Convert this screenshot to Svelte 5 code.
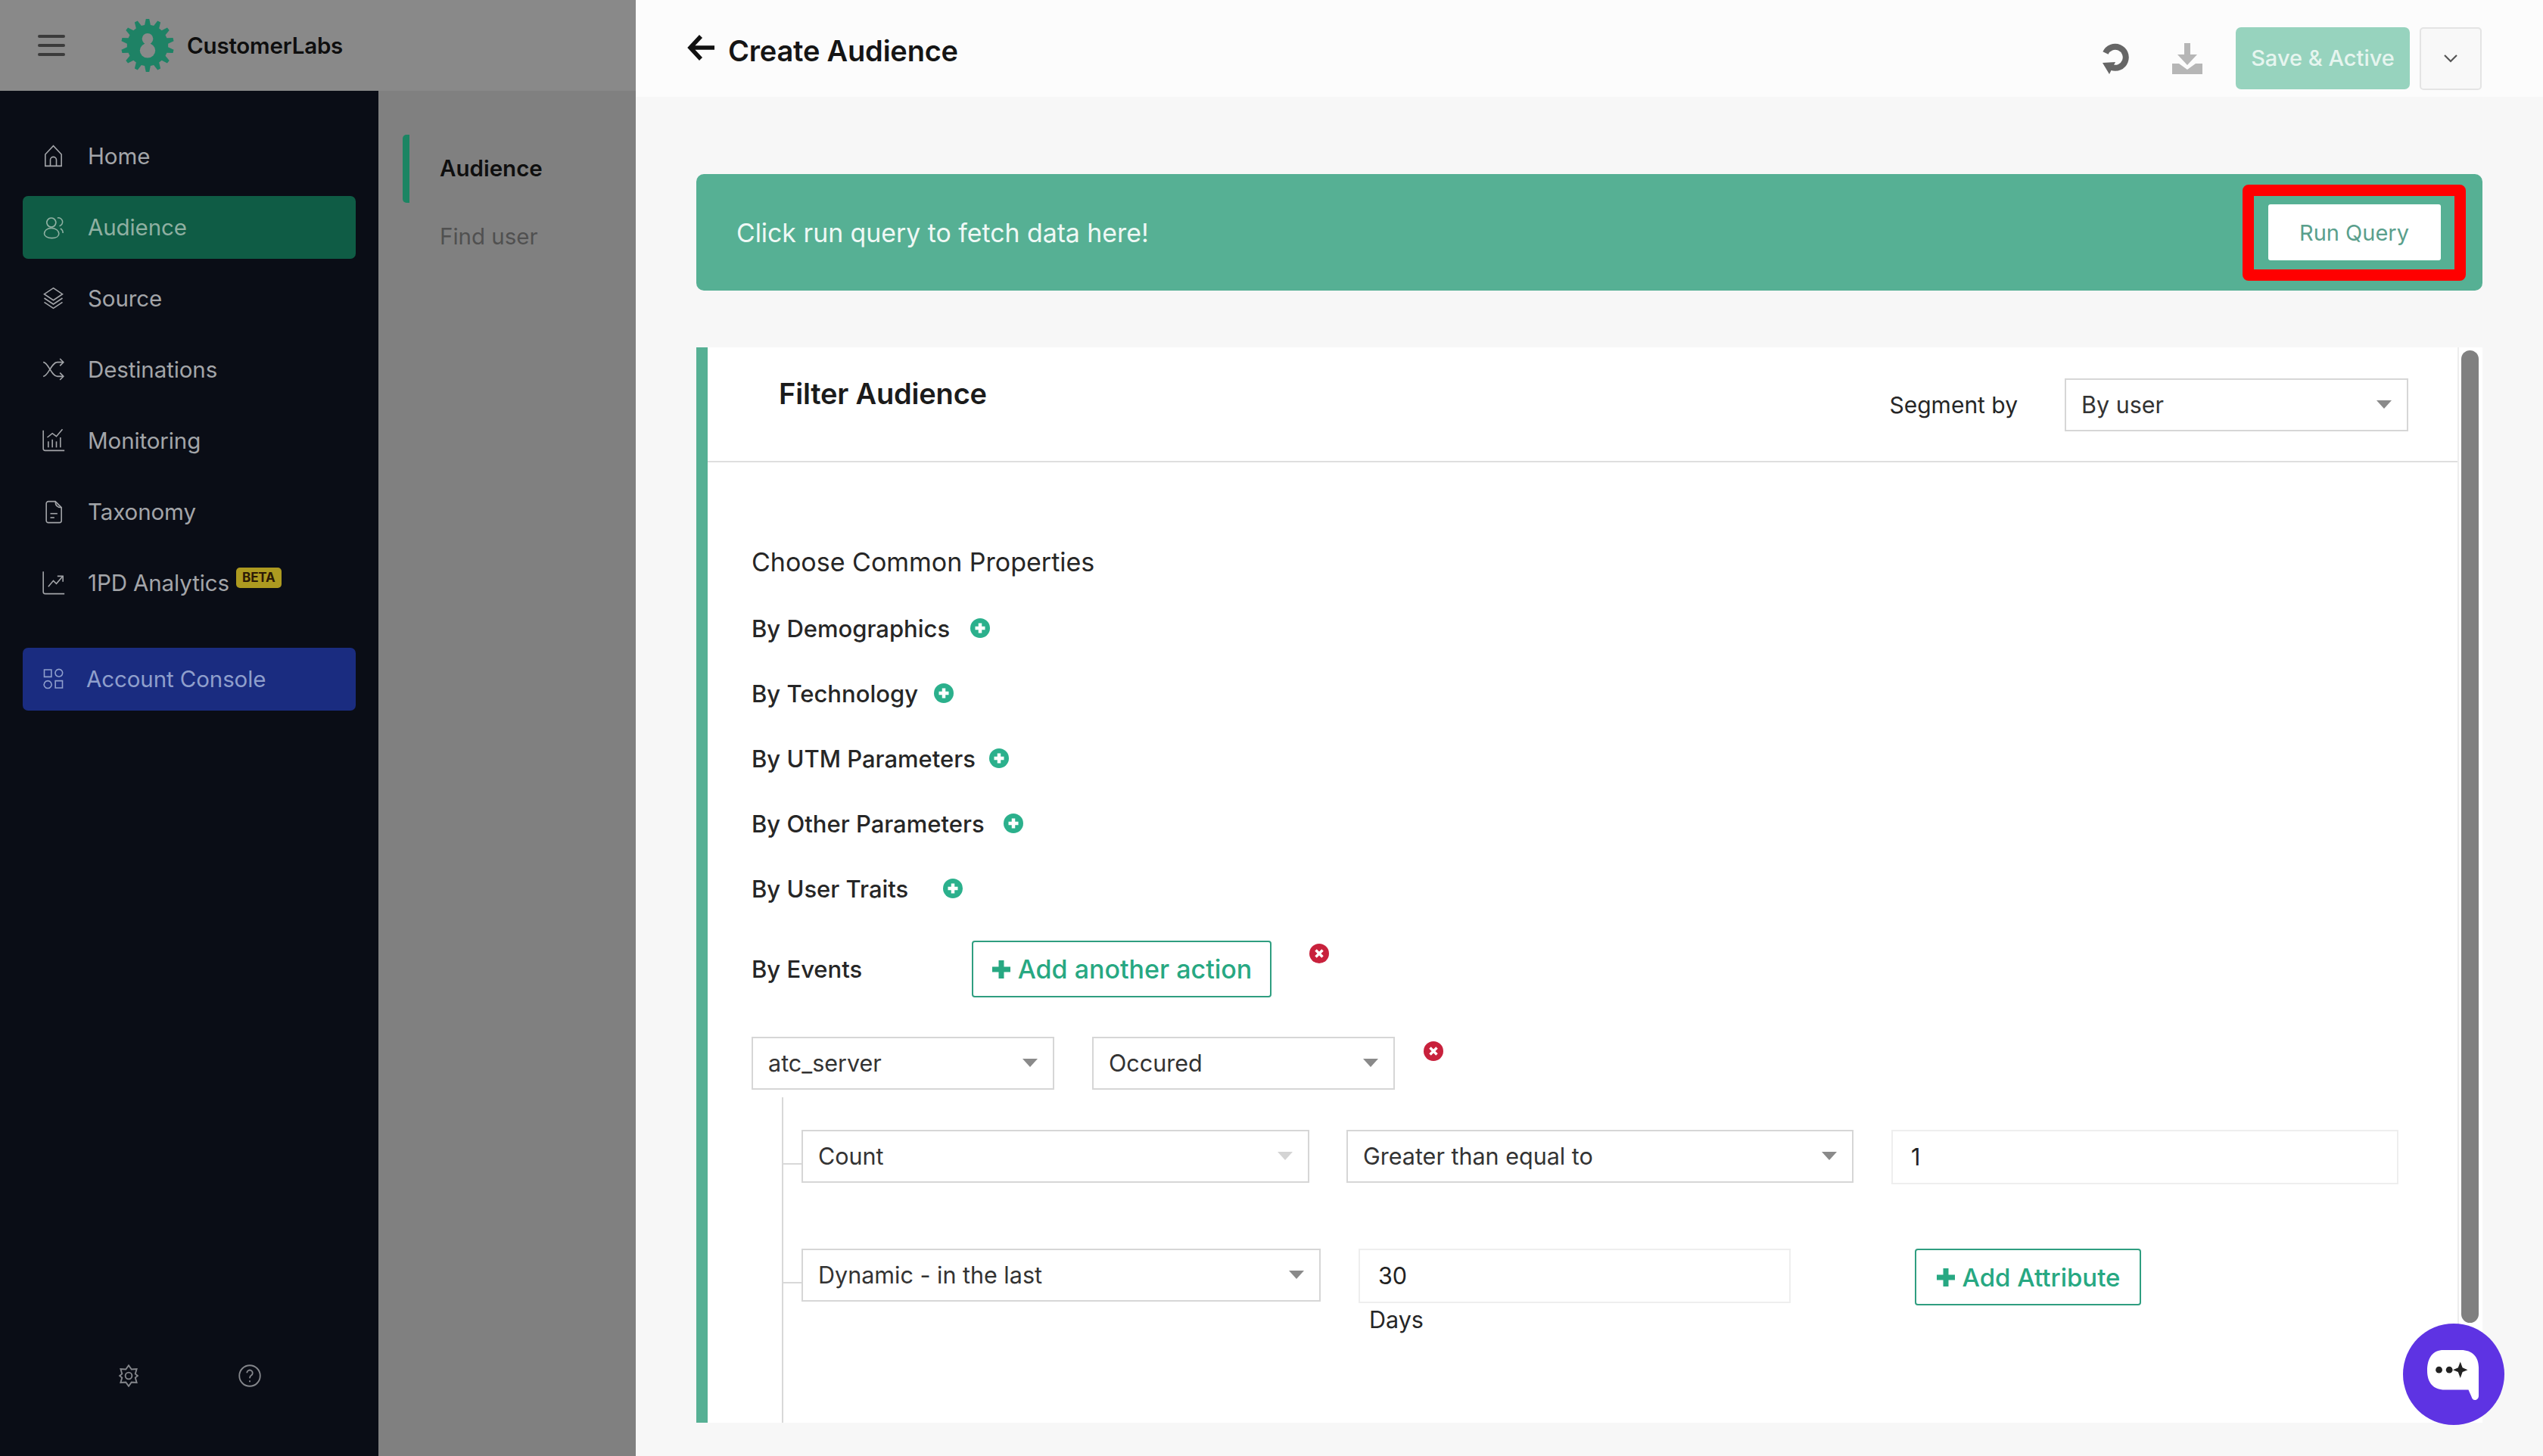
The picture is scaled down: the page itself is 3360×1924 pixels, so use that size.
<script>
  const nav = [
    { label: "Home", paths: ["M4 22V10.500L12 2l8 8.500V22z", "M9 22v-6a3 3 0 0 1 6 0v6"] },
    { label: "Audience", active: true, paths: ["M10 3a4.500 4.500 0 1 1-.01 0z", "M10 13c-4.500 0-7 3-7 5.500S6 23 10.500 23s7-2 7-4.500S14.500 13 10 13z", "M16 3a4 4 0 0 1 2 8", "M19 13.500c1.500.8 2.500 2.500 2.500 4.500"] },
    { label: "Source", paths: ["M12 2l9 6-9 6-9-6z", "M3 12l9 6 9-6", "M3 16l9 6 9-6"] },
    { label: "Destinations", paths: ["M2 5c5 0 8 14 14 14h6", "M2 19c5 0 8-14 14-14h6", "M18.500 1.500L22 5l-3.500 3.500", "M18.500 15.500L22 19l-3.500 3.500"] },
    { label: "Monitoring", paths: ["M2 2v18a2 2 0 0 0 2 2h19", "M7 19v-6", "M11 19v-8", "M15 19v-6", "M19 19V9", "M6 9l5-4 4 3 6-7"] },
    { label: "Taxonomy", paths: ["M5 4a2 2 0 0 1 2-2h7l6 6v13a2 2 0 0 1-2 2H7a2 2 0 0 1-2-2z", "M14 2c0 4 2 6 6 6", "M9 14h7", "M9 18h4"] },
    { label: "1PD Analytics", beta: true, paths: ["M2 1v20a2 2 0 0 0 2 2h19", "M7 16l5-6 3 3 6-7", "M16 5.500h5.500V11"] },
  ];
  const consolePaths = ["M3 3h7v7H3z", "M17.500 2.500a3.700 3.700 0 1 1-.01 0z", "M6.500 14a3.700 3.700 0 1 1-.01 0z", "M14 14h7v7h-7z"];

  const propRows = [
    { label: "By Demographics", gap: 27 },
    { label: "By Technology", gap: 21 },
    { label: "By UTM Parameters", gap: 18 },
    { label: "By Other Parameters", gap: 25 },
    { label: "By User Traits", gap: 46 },
  ];

  // logo cog outline, 14 teeth
  function cogPoints(teeth, outer, inner, cx, cy) {
    const pts = [];
    const step = (Math.PI * 2) / teeth;
    for (let i = 0; i < teeth; i++) {
      const a = i * step - Math.PI / 2;
      const spots = [
        [a - step * 0.32, inner],
        [a - step * 0.14, outer],
        [a + step * 0.14, outer],
        [a + step * 0.32, inner],
      ];
      for (const [t, r] of spots) {
        pts.push((cx + Math.cos(t) * r).toFixed(1) + "," + (cy + Math.sin(t) * r).toFixed(1));
      }
    }
    return pts.join(" ");
  }
  const logoCog = cogPoints(14, 36, 28, 36, 36);
</script>

{#snippet plusCircle()}
  <svg class="dot" viewBox="0 0 26 26" aria-hidden="true">
    <circle cx="13" cy="13" r="13" fill="#2bb08c" />
    <path d="M13 6.500v13M6.500 13h13" stroke="#fff" stroke-width="4.500" />
  </svg>
{/snippet}

{#snippet closeCircle()}
  <svg class="dot" viewBox="0 0 26 26" aria-hidden="true">
    <circle cx="13" cy="13" r="13" fill="#c8213c" />
    <path d="M8.500 8.500l9 9M17.500 8.500l-9 9" stroke="#fff" stroke-width="3.500" />
  </svg>
{/snippet}

{#snippet plusGlyph()}
  <svg class="plus" viewBox="0 0 26 26" aria-hidden="true">
    <path d="M13 1v24M1 13h24" stroke="#27a882" stroke-width="7" />
  </svg>
{/snippet}

{#snippet select(value, cls = "")}
  <div class="select {cls}">
    <span>{value}</span>
    <i class="caret"></i>
  </div>
{/snippet}

<div class="shell">
  <div class="left">
    <div class="brand">
      <div class="burger"><i></i><i></i><i></i></div>
      <svg class="logo" viewBox="0 0 72 72" aria-hidden="true">
        <polygon points={logoCog} fill="#1e8265" />
        <circle cx="36" cy="27" r="7.500" fill="#8a8a8a" />
        <ellipse cx="36" cy="43" rx="10.500" ry="10" fill="#8a8a8a" />
        <rect x="32" y="30" width="8" height="6" fill="#8a8a8a" />
      </svg>
      <span class="brand-name">CustomerLabs</span>
    </div>

    <div class="left-body">
      <nav class="sidebar">
        {#each nav as item}
          <div class="nav-item" class:active={item.active}>
            <svg class="nav-icon" viewBox="0 0 24 24" aria-hidden="true">
              {#each item.paths as d}<path {d} />{/each}
            </svg>
            <span>{item.label}</span>
            {#if item.beta}<b class="beta">BETA</b>{/if}
          </div>
        {/each}

        <div class="nav-item console">
          <svg class="nav-icon" viewBox="0 0 24 24" aria-hidden="true">
            {#each consolePaths as d}<path {d} />{/each}
          </svg>
          <span>Account Console</span>
        </div>

        <div class="side-foot">
          <svg class="foot-icon" viewBox="0 0 24 24" aria-hidden="true">
            <path d="M12 1l3 4.200 5.500-.3-1.500 5 2.500 2.100-2.500 2.100 1.500 5-5.500-.3-3 4.200-3-4.200-5.500.3 1.500-5L2.500 12 5 9.900l-1.500-5 5.500.3z" />
            <circle cx="12" cy="12" r="3.500" />
          </svg>
          <svg class="foot-icon" viewBox="0 0 24 24" aria-hidden="true">
            <circle cx="12" cy="12" r="11" />
            <path d="M9 9a3 3 0 1 1 4.500 2.600c-1 .6-1.500 1.300-1.500 2.900" />
            <path d="M12 17v1.500" />
          </svg>
        </div>
      </nav>

      <aside class="subnav">
        <div class="sub-item current">Audience</div>
        <div class="sub-item">Find user</div>
      </aside>
    </div>
  </div>

  <main class="main">
    <header class="head">
      <svg class="back" viewBox="0 0 38 36" aria-hidden="true">
        <path d="M36 18H5M18 3L4 18l14 15" fill="none" stroke="#111" stroke-width="5.500" />
      </svg>
      <h1>Create Audience</h1>
      <div class="head-actions">
        <svg class="reload" viewBox="0 0 36 41" aria-hidden="true">
          <path d="M5 13A14 14 0 1 1 13 32" fill="none" stroke="#666" stroke-width="8" />
          <path d="M1 26l17-1-8 16z" fill="#666" />
        </svg>
        <svg class="download" viewBox="0 0 40 41" aria-hidden="true">
          <path d="M16 0h8v15h9L20 29 7 15h9z" fill="#b6b6b6" />
          <path d="M0 27h9l11 8 11-8h9v14H0z" fill="#b6b6b6" />
        </svg>
        <button class="save">Save &amp; Active</button>
        <button class="more" aria-label="More">
          <svg viewBox="0 0 20 12" aria-hidden="true"><path d="M2 2l8 8 8-8" fill="none" stroke="#555" stroke-width="2.200" /></svg>
        </button>
      </div>
    </header>

    <div class="content">
      <section class="banner">
        <span>Click run query to fetch data here!</span>
        <div class="highlight"><button class="run">Run Query</button></div>
      </section>

      <section class="card">
        <div class="card-main">
          <div class="card-head">
            <h2>Filter Audience</h2>
            <div class="segment">
              <span>Segment by</span>
              {@render select("By user", "seg-select")}
            </div>
          </div>

          <div class="card-body">
            <p class="choose">Choose Common Properties</p>
            <div class="props">
              {#each propRows as row}
                <div class="prop" style="gap: {row.gap}px">
                  <span>{row.label}</span>
                  {@render plusCircle()}
                </div>
              {/each}
            </div>

            <div class="events">
              <span class="events-label">By Events</span>
              <button class="outline action">{@render plusGlyph()}<span>Add another action</span></button>
              <div class="x-top">{@render closeCircle()}</div>
            </div>

            <div class="event-row">
              {@render select("atc_server", "w-400")}
              {@render select("Occured", "w-400")}
              <div class="x-side">{@render closeCircle()}</div>
            </div>

            <div class="tree">
              <div class="tree-row first">
                {@render select("Count", "count branch")}
                {@render select("Greater than equal to", "greater")}
                <div class="input one">1</div>
              </div>
              <div class="tree-row second">
                {@render select("Dynamic - in the last", "dynamic branch")}
                <div class="days-col">
                  <div class="input thirty">30</div>
                  <span class="days">Days</span>
                </div>
                <button class="outline attr">{@render plusGlyph()}<span>Add Attribute</span></button>
              </div>
            </div>
          </div>
        </div>
        <div class="scroll-track"><div class="scroll-thumb"></div></div>
      </section>
    </div>
  </main>

  <div class="chat">
    <svg viewBox="0 0 76 72" aria-hidden="true">
      <path d="M24 2h24c15 0 24 9 24 24v38c0 3-2 6-5 6s-4-2-5-5l-4-9H26C10 56 2 46 2 30 2 12 10 2 24 2z" fill="#fff" />
      <circle cx="18" cy="29" r="4.500" fill="#222" />
      <circle cx="32" cy="29" r="4.500" fill="#222" />
      <path d="M47 18l3 8 7 3-7 3-3 8-3-8-7-3 7-3z" fill="#222" />
    </svg>
  </div>
</div>

<style>
  :global(body) {
    margin: 0;
    background: #f7f7f7;
    font-family: Inter, "Noto Sans", sans-serif;
  }

  .shell {
    position: relative;
    display: flex;
    width: 3360px;
    height: 1924px;
    overflow: hidden;
    color: #262626;
  }

  button {
    font: inherit;
    cursor: pointer;
  }

  /* dimmed left part */
  .left {
    width: 840px;
    flex: none;
    display: flex;
    flex-direction: column;
  }

  .brand {
    height: 120px;
    flex: none;
    display: flex;
    align-items: center;
    padding-left: 50px;
    background: #898989;
  }

  .burger {
    width: 36px;
    display: grid;
    gap: 8px;
  }

  .burger i {
    height: 4px;
    border-radius: 2px;
    background: #3b3b3b;
  }

  .logo {
    width: 70px;
    height: 74px;
    margin-left: 74px;
  }

  .brand-name {
    margin-left: 17px;
    font-size: 29.500px;
    font-weight: 600;
    letter-spacing: -0.2px;
    color: #0e0e0e;
  }

  .left-body {
    flex: 1;
    display: flex;
    min-height: 0;
  }

  .sidebar {
    width: 500px;
    box-sizing: border-box;
    padding: 45px 30px 0;
    display: flex;
    flex-direction: column;
    gap: 11px;
    background: #0a0d16;
  }

  .nav-item {
    height: 83px;
    flex: none;
    box-sizing: border-box;
    display: flex;
    align-items: center;
    padding: 0 0 1px 24px;
    border-radius: 7px;
    font-size: 29.500px;
    letter-spacing: -0.1px;
    color: #a3a5a9;
  }

  .nav-item span {
    margin-left: 29px;
  }

  .nav-item.active {
    background: #0f5c45;
    color: #8fb0a2;
  }

  .nav-item.console {
    margin-top: 33px;
    background: #1a2c80;
    color: #8f9fcc;
  }

  .nav-item.console span {
    margin-left: 27px;
  }

  .nav-icon {
    width: 33px;
    height: 32px;
    flex: none;
    fill: none;
    stroke: currentColor;
    stroke-width: 1.200;
  }

  .beta {
    margin: 0 0 14px 9px;
    padding: 4px 8px;
    border-radius: 5px;
    background: #ad9a20;
    color: #2b1906;
    font-size: 17px;
    line-height: 19px;
    font-weight: 700;
  }

  .side-foot {
    margin-top: auto;
    padding: 0 0 91px 125px;
    display: flex;
    gap: 130px;
  }

  .foot-icon {
    width: 30px;
    height: 30px;
    fill: none;
    stroke: #85878c;
    stroke-width: 1.500;
  }

  .subnav {
    flex: 1;
    padding: 58px 0 0 32px;
    background: #808080;
  }

  .sub-item {
    height: 90px;
    box-sizing: border-box;
    display: flex;
    align-items: center;
    padding: 0 0 2px 49px;
    font-size: 29.500px;
    color: #505050;
  }

  .sub-item.current {
    border-left: 9px solid #1c8563;
    border-radius: 5px;
    padding-left: 40px;
    font-weight: 600;
    color: #0f0f0f;
  }

  .main {
    flex: 1;
    min-width: 0;
    display: flex;
    flex-direction: column;
  }

  .head {
    height: 128px;
    flex: none;
    box-sizing: border-box;
    display: flex;
    align-items: center;
    padding: 0 81px 0 68px;
    background: #fcfcfc;
  }

  .back {
    width: 38px;
    height: 36px;
    margin-bottom: 2px;
  }

  h1 {
    margin: 5px 0 0 16px;
    font-size: 38px;
    line-height: 46px;
    font-weight: 600;
    letter-spacing: -0.2px;
    color: #151515;
  }

  .head-actions {
    margin-left: auto;
    padding-top: 26px;
    display: flex;
    align-items: center;
  }

  .reload {
    width: 36px;
    height: 41px;
  }

  .download {
    width: 40px;
    height: 41px;
    margin-left: 57px;
  }

  .save {
    width: 230px;
    height: 82px;
    margin-left: 44px;
    padding-bottom: 3px;
    border: 0;
    border-radius: 7px;
    background: #97d3be;
    color: #e6f5ef;
    font-size: 29px;
    font-weight: 500;
  }

  .more {
    width: 82px;
    height: 83px;
    margin-left: 13px;
    display: grid;
    place-items: center;
    border: 2px solid #e4e4e4;
    border-radius: 5px;
    background: #f8f8f8;
  }

  .more svg {
    width: 20px;
    height: 12px;
  }

  .content {
    flex: 1;
    min-height: 0;
    padding: 102px 80px 44px;
    display: flex;
    flex-direction: column;
    gap: 75px;
  }

  .banner {
    height: 154px;
    flex: none;
    display: flex;
    align-items: center;
    justify-content: space-between;
    padding: 0 22px 0 53px;
    border-radius: 10px;
    background: #56b094;
    color: #eff8f5;
    font-size: 33.800px;
  }

  .highlight {
    box-sizing: border-box;
    width: 295px;
    height: 127px;
    display: grid;
    place-items: center;
    border: 15px solid #ff0000;
    border-radius: 8px;
  }

  .highlight .run {
    width: 228px;
    height: 74px;
    border: 0;
    border-radius: 3px;
    background: #fff;
    color: #5a9f8c;
    font-size: 29px;
  }

  .card {
    flex: 1;
    min-height: 0;
    display: flex;
    overflow: hidden;
    border-left: 15px solid #56b094;
    background: #fff;
  }

  .card-main {
    flex: 1;
    min-width: 0;
    display: flex;
    flex-direction: column;
  }

  .card-head {
    height: 152px;
    flex: none;
    box-sizing: border-box;
    display: flex;
    align-items: flex-start;
    justify-content: space-between;
    padding: 41px 65px 0 94px;
    border-bottom: 2px solid #dedede;
  }

  h2 {
    margin: -3px 0 0;
    font-size: 38px;
    line-height: 46px;
    font-weight: 600;
    letter-spacing: -0.2px;
    color: #1b1b1b;
  }

  .segment {
    display: flex;
    align-items: center;
    gap: 62px;
    font-size: 30px;
  }

  .select {
    box-sizing: border-box;
    height: 70px;
    flex: none;
    display: flex;
    align-items: center;
    justify-content: space-between;
    padding: 0 20px 2px 20px;
    border: 2px solid #d6d6d6;
    background: #fff;
    font-size: 30.500px;
    color: #333;
  }

  .caret {
    width: 0;
    height: 0;
    border-left: 10px solid transparent;
    border-right: 10px solid transparent;
    border-top: 11px solid #8a8a8a;
  }

  :global(.seg-select) {
    width: 454px;
  }

  .card-body {
    flex: 1;
    min-height: 0;
    display: flex;
    flex-direction: column;
    padding: 109px 0 0 58px;
  }

  .choose {
    margin: 0 0 41px;
    font-size: 34px;
    line-height: 46px;
    color: #262626;
  }

  .props {
    display: flex;
    flex-direction: column;
    gap: 40px;
  }

  .prop {
    height: 46px;
    display: flex;
    align-items: center;
    font-size: 31px;
    font-weight: 500;
    color: #262626;
  }

  .dot {
    width: 26px;
    height: 26px;
    flex: none;
    display: block;
  }

  .events {
    height: 75px;
    margin-top: 46px;
    display: flex;
    align-items: center;
    font-size: 31px;
    font-weight: 500;
  }

  .events-label {
    width: 291px;
  }

  .outline {
    box-sizing: border-box;
    height: 75px;
    display: flex;
    align-items: center;
    justify-content: center;
    gap: 9px;
    padding: 0;
    border: 2px solid #2f9e80;
    border-radius: 4px;
    background: #fff;
    color: #27a882;
    font-size: 33px;
    font-weight: 500;
  }

  .action {
    width: 396px;
    font-size: 34px;
  }

  .attr {
    width: 299px;
    margin-left: 164px;
  }

  .plus {
    width: 26px;
    height: 26px;
    flex: none;
  }

  .x-top {
    align-self: flex-start;
    margin: 4px 0 0 50px;
  }

  .event-row {
    margin-top: 52px;
    display: flex;
    gap: 50px;
  }

  :global(.w-400) {
    width: 400px;
  }

  .x-side {
    margin: 6px 0 0 -12px;
  }

  .tree {
    flex: 1;
    margin: 10px 0 0 40px;
    padding: 43px 0 0 24px;
    border-left: 2px solid #d8d8d8;
  }

  .tree-row {
    display: flex;
    align-items: flex-start;
  }

  .tree-row.second {
    margin-top: 85px;
  }

  :global(.branch) {
    position: relative;
  }

  :global(.branch)::before {
    content: "";
    position: absolute;
    left: -26px;
    top: 42px;
    width: 24px;
    height: 2px;
    background: #d8d8d8;
  }

  :global(.count) {
    width: 671px;
    background: #f9f9f9;
  }

  :global(.count) .caret {
    border-top-color: #d4d4d4;
  }

  :global(.greater) {
    width: 670px;
    margin-left: 49px;
  }

  :global(.dynamic) {
    width: 686px;
  }

  .input {
    box-sizing: border-box;
    height: 72px;
    display: flex;
    align-items: center;
    padding: 0 0 2px 24px;
    border: 2px solid #eeeeee;
    font-size: 30.500px;
    color: #222;
  }

  .one {
    width: 670px;
    margin-left: 50px;
  }

  .days-col {
    width: 571px;
    margin-left: 50px;
  }

  .thirty {
    width: 571px;
  }

  .days {
    display: block;
    margin: -1px 0 0 14px;
    font-size: 30.500px;
    line-height: 46px;
  }

  .scroll-track {
    width: 33px;
    flex: none;
    padding-top: 4px;
    border-left: 2px solid #ededed;
    box-sizing: border-box;
  }

  .scroll-thumb {
    width: 23px;
    height: 1285px;
    margin-left: 3px;
    border-radius: 12px;
    background: #808080;
  }

  .chat {
    position: absolute;
    right: 51px;
    bottom: 41px;
    width: 134px;
    height: 134px;
    display: grid;
    place-items: center;
    border-radius: 50%;
    background: #5e33e3;
  }

  .chat svg {
    width: 74px;
    height: 70px;
    margin-top: 2px;
  }
</style>
